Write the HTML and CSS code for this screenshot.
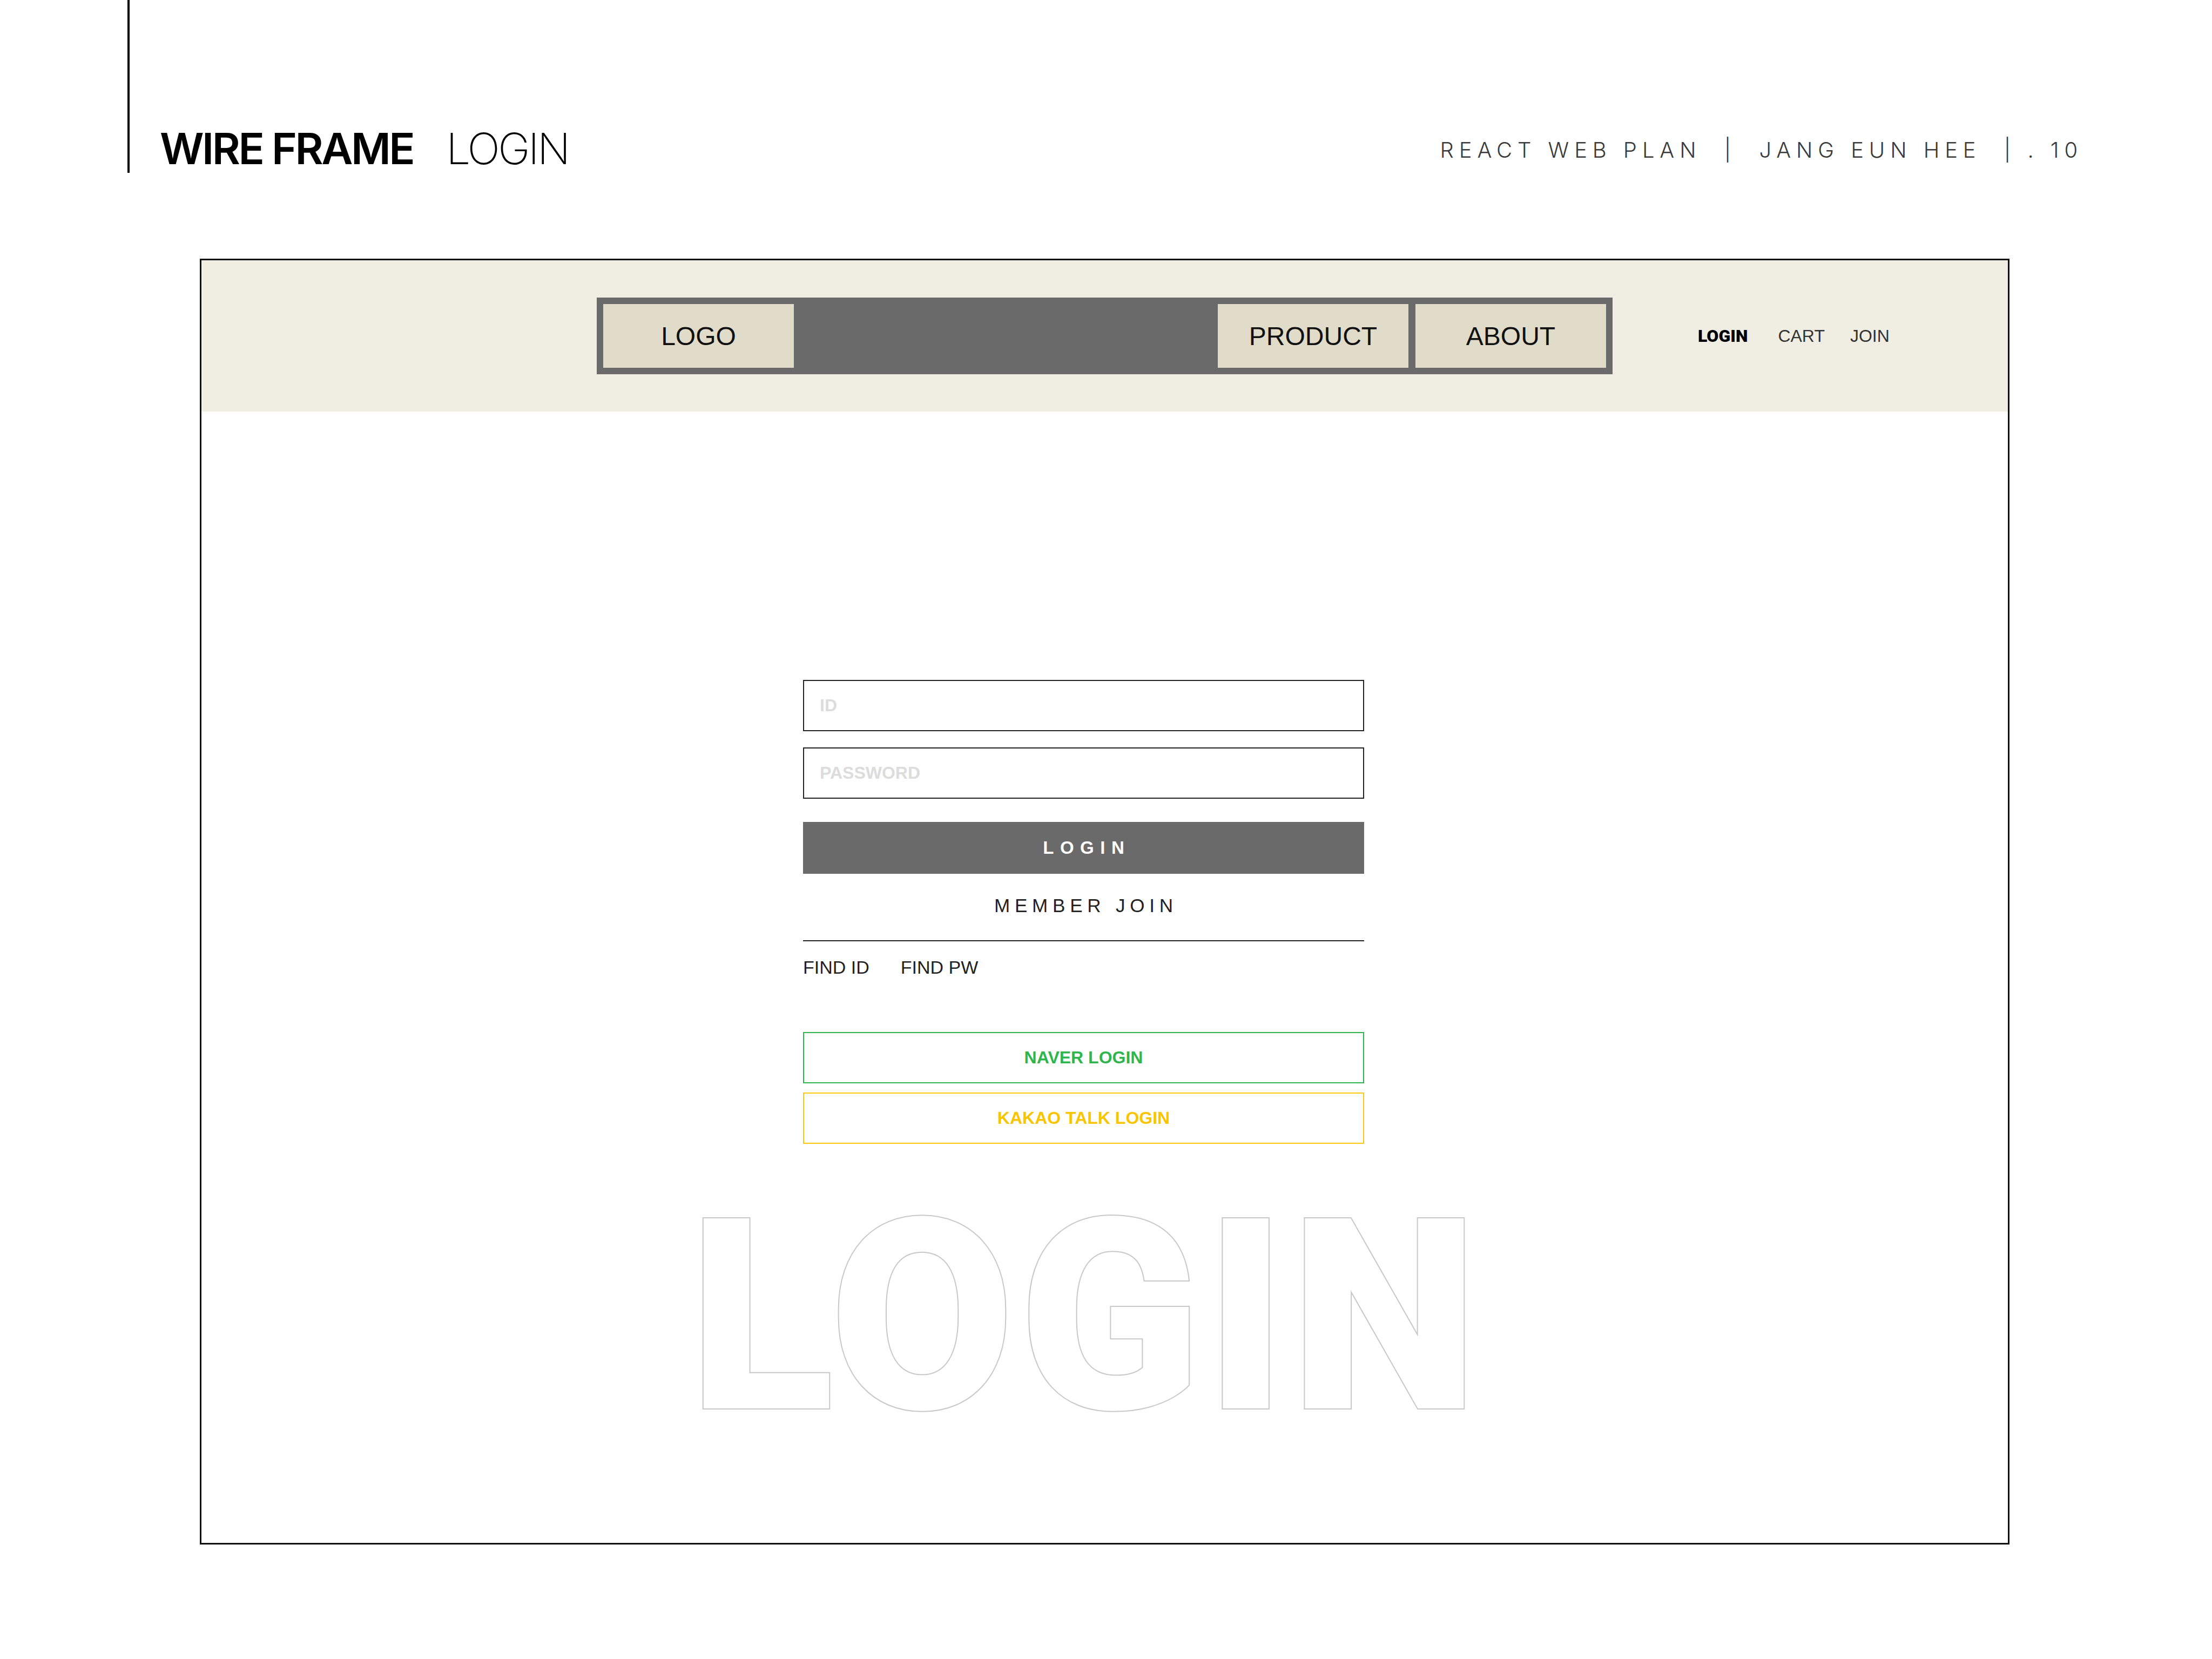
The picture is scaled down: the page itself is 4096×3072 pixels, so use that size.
FILE: index.html
```html
<!DOCTYPE html>
<html lang="ko">
<head>
    <meta charset="UTF-8">
    <title>WIRE FRAME LOGIN</title>
    <link rel="stylesheet" href="styles.css">
</head>
<body>
    <header class="sheet-head">
        <h1 class="sheet-title">
            <span class="title-strong">WIRE FRAME</span><span class="title-light">LOGIN</span>
        </h1>
        <p class="sheet-meta">REACT WEB PLAN  |  JANG EUN HEE  | . 10</p>
    </header>

    <div class="frame">
        <div class="app-head">
            <nav class="gnb">
                <a class="gnb-item">LOGO</a>
                <div class="gnb-menu">
                    <a class="gnb-item">PRODUCT</a>
                    <a class="gnb-item">ABOUT</a>
                </div>
            </nav>
            <ul class="util">
                <li class="on">LOGIN</li>
                <li>CART</li>
                <li>JOIN</li>
            </ul>
        </div>

        <main class="app-main">
            <form class="login-form" autocomplete="off">
                <input class="field" type="text" placeholder="ID">
                <input class="field" type="password" placeholder="PASSWORD">
                <button class="btn-login" type="button">LOGIN</button>
                <a class="member-join">MEMBER JOIN</a>
                <div class="find">
                    <a>FIND ID</a>
                    <a>FIND PW</a>
                </div>
                <button class="sns naver" type="button">NAVER LOGIN</button>
                <button class="sns kakao" type="button">KAKAO TALK LOGIN</button>
            </form>
            <div class="big-login">LOGIN</div>
        </main>
    </div>
</body>
</html>
```

FILE: styles.css
```css
body {
    margin: 0;
    background: #fff;
    font-family: "Liberation Sans", Arial, sans-serif;
    color: #222;
}

/* slide header */
.sheet-head {
    display: flex;
    justify-content: space-between;
    align-items: flex-end;
    height: 320px;
    box-sizing: border-box;
    margin-left: 236px;
    padding-left: 56px;
    padding-right: 239px;
    border-left: 4px solid #000;
    font-family: Inter, "Noto Sans", sans-serif;
}
.sheet-title {
    margin: 0 0 5px 0;
    font-size: 80px;
    line-height: 80px;
    font-weight: 600;
    letter-spacing: -3.5px;
    color: #000;
}
.title-light {
    margin-left: 61px;
    font-weight: 200;
}
.sheet-meta {
    margin: 0 0 22px 0;
    font-size: 40px;
    line-height: 40px;
    font-weight: 300;
    letter-spacing: 9.9px;
    white-space: pre;
    color: #3a3a3a;
}

/* wireframe box */
.frame {
    width: 3351px;
    height: 2381px;
    box-sizing: border-box;
    margin: 159px 0 0 370px;
    border: 3px solid #111;
    display: flex;
    flex-direction: column;
}
.app-head {
    display: grid;
    grid-template-columns: 1fr auto 1fr;
    align-items: center;
    height: 280px;
    background: #f0eee2;
}
.gnb {
    grid-column: 2;
    display: flex;
    justify-content: space-between;
    width: 1881px;
    box-sizing: border-box;
    padding: 12px;
    background: #6a6a6a;
}
.gnb-menu {
    display: flex;
    gap: 13px;
}
.gnb-item {
    width: 353px;
    height: 118px;
    display: flex;
    align-items: center;
    justify-content: center;
    background: #e1dcc9;
    font-size: 48px;
    color: #111;
}
.util {
    display: flex;
    align-items: center;
    list-style: none;
    margin: 0;
    padding: 0 0 0 158px;
    font-size: 32px;
    color: #333;
}
.util li {
    margin-right: 47px;
}
.util li.on {
    margin-right: 56px;
    font-family: Roboto, sans-serif;
    font-weight: 900;
    color: #000;
}

/* login */
.app-main {
    flex: 1;
    display: flex;
    flex-direction: column;
    align-items: center;
    padding: 497px 78px 0 0;
    overflow: hidden;
}
.login-form {
    width: 1039px;
    display: flex;
    flex-direction: column;
}
.field {
    height: 95px;
    box-sizing: border-box;
    margin: 0;
    padding: 0 29px;
    border: 2px solid #222;
    outline: none;
    font-family: "Liberation Sans", Arial, sans-serif;
    font-size: 32px;
    font-weight: 700;
    color: #222;
}
.field::placeholder {
    color: #dcdcdc;
}
.field + .field {
    margin-top: 30px;
}
.btn-login {
    margin-top: 43px;
    height: 96px;
    border: none;
    background: #6a6a6a;
    color: #fff;
    font-family: "Liberation Sans", Arial, sans-serif;
    font-size: 33px;
    font-weight: 700;
    letter-spacing: 11.5px;
    padding: 0 0 0 11.5px;
}
.member-join {
    display: block;
    text-align: center;
    font-size: 35px;
    line-height: 117px;
    letter-spacing: 8.8px;
    padding: 0 0 6px 8.8px;
    border-bottom: 2px solid #222;
}
.find {
    display: flex;
    gap: 58px;
    margin-top: 31px;
    font-size: 34px;
    line-height: 34px;
}
.sns {
    height: 95px;
    margin-top: 103px;
    background: #fff;
    border: 2px solid;
    font-family: "Liberation Sans", Arial, sans-serif;
    font-size: 32px;
    font-weight: 700;
}
.naver {
    border-color: #2eb64c;
    color: #2eb64c;
}
.kakao {
    margin-top: 17px;
    border-color: #fbc90d;
    color: #f9c400;
}
.big-login {
    margin: 74px 0 0 8px;
    font-family: Roboto, "Liberation Sans", sans-serif;
    font-size: 495px;
    line-height: 495px;
    font-weight: 900;
    letter-spacing: 8px;
    white-space: nowrap;
    color: #fff;
    -webkit-text-stroke: 4px #c8c8c8;
    paint-order: stroke fill;
}
```
